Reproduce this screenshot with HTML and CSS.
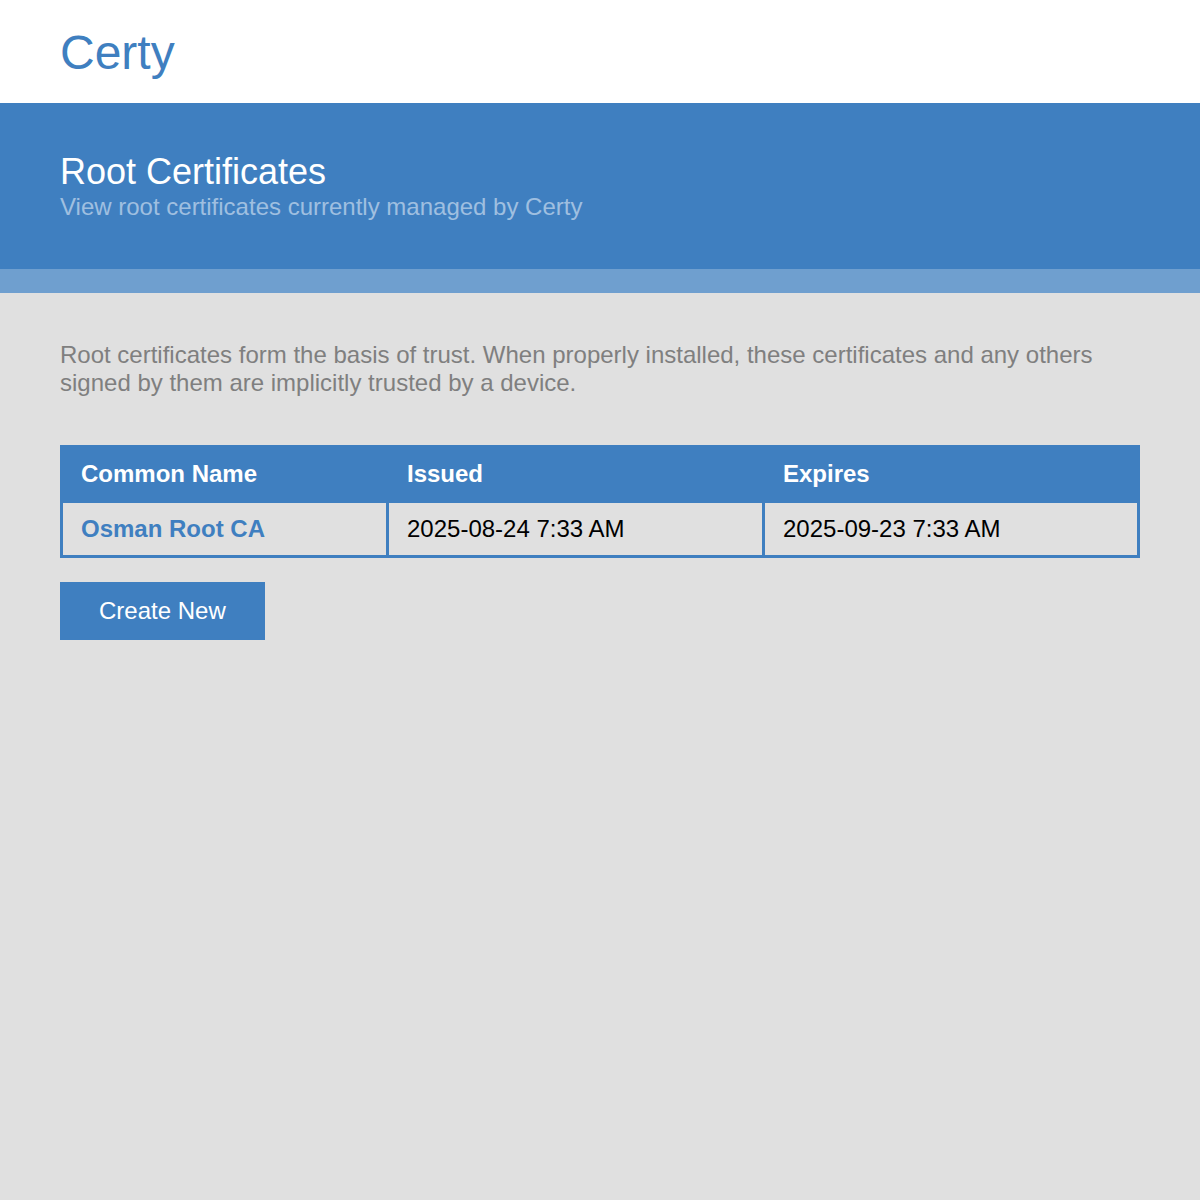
FILE: index.html
```html
<!DOCTYPE html>
<html lang="en">
<head>
<meta charset="utf-8">
<title>Certy - Root Certificates</title>
<link rel="stylesheet" href="styles.css">
</head>
<body>
  <header class="topbar">
    <div class="brand">Certy</div>
  </header>
  <section class="banner">
    <h1 class="banner-title">Root Certificates</h1>
    <div class="banner-sub">View root certificates currently managed by Certy</div>
  </section>
  <div class="stripe"></div>
  <main class="content">
    <p class="intro">Root certificates form the basis of trust. When properly installed, these certificates and any others signed by them are implicitly trusted by a device.</p>
    <table class="certs">
      <colgroup>
        <col class="c1">
        <col class="c2">
        <col class="c3">
      </colgroup>
      <thead>
        <tr>
          <th>Common Name</th>
          <th class="divided">Issued</th>
          <th class="divided">Expires</th>
        </tr>
      </thead>
      <tbody>
        <tr>
          <td><a class="cert-link" href="#">Osman Root CA</a></td>
          <td class="divided">2025-08-24 7:33 AM</td>
          <td class="divided">2025-09-23 7:33 AM</td>
        </tr>
      </tbody>
    </table>
    <button class="btn" type="button">Create New</button>
  </main>
</body>
</html>
```
FILE: styles.css
```css
html, body {
  margin: 0;
  padding: 0;
}
body {
  background: #e0e0e0;
  font-family: "Liberation Sans", Arial, sans-serif;
  font-size: 24px;
  min-height: 1200px;
}
.topbar {
  background: #ffffff;
  padding: 25px 60px 23px;
}
.brand {
  color: #3f7fc0;
  font-size: 48px;
  line-height: 55px;
}
.banner {
  background: #3f7fc0;
  padding: 48px 60px 48px;
}
.banner-title {
  margin: 0;
  font-weight: normal;
  font-size: 36px;
  line-height: 42px;
  color: #ffffff;
}
.banner-sub {
  color: #9fbfe0;
  font-size: 24px;
  line-height: 28px;
}
.stripe {
  height: 24px;
  background: #6f9fcf;
}
.content {
  padding: 48px 60px 40px;
}
.intro {
  margin: 0 0 48px;
  color: #7f7f7f;
  font-size: 24px;
  line-height: 28px;
}
.certs {
  width: 1080px;
  table-layout: fixed;
  border-collapse: separate;
  border-spacing: 0;
  border: 3px solid #3f7fc0;
}
.c1 { width: 323px; }
.c2 { width: 376px; }
.certs th {
  background: #3f7fc0;
  color: #ffffff;
  font-weight: bold;
  text-align: left;
  padding: 12px 18px 12px;
  line-height: 28px;
  font-size: 24px;
}
.certs td {
  border-top: 3px solid #3f7fc0;
  padding: 12px 18px 12px;
  line-height: 28px;
  font-size: 24px;
  color: #000000;
}
.certs th.divided,
.certs td.divided {
  border-left: 3px solid #3f7fc0;
}
.cert-link {
  color: #3f7fc0;
  font-weight: bold;
  text-decoration: none;
}
.btn {
  display: block;
  margin-top: 24px;
  background: #3f7fc0;
  color: #ffffff;
  border: none;
  border-radius: 0;
  font-family: "Liberation Sans", Arial, sans-serif;
  font-size: 24px;
  line-height: 28px;
  padding: 15px 39px;
}
```
